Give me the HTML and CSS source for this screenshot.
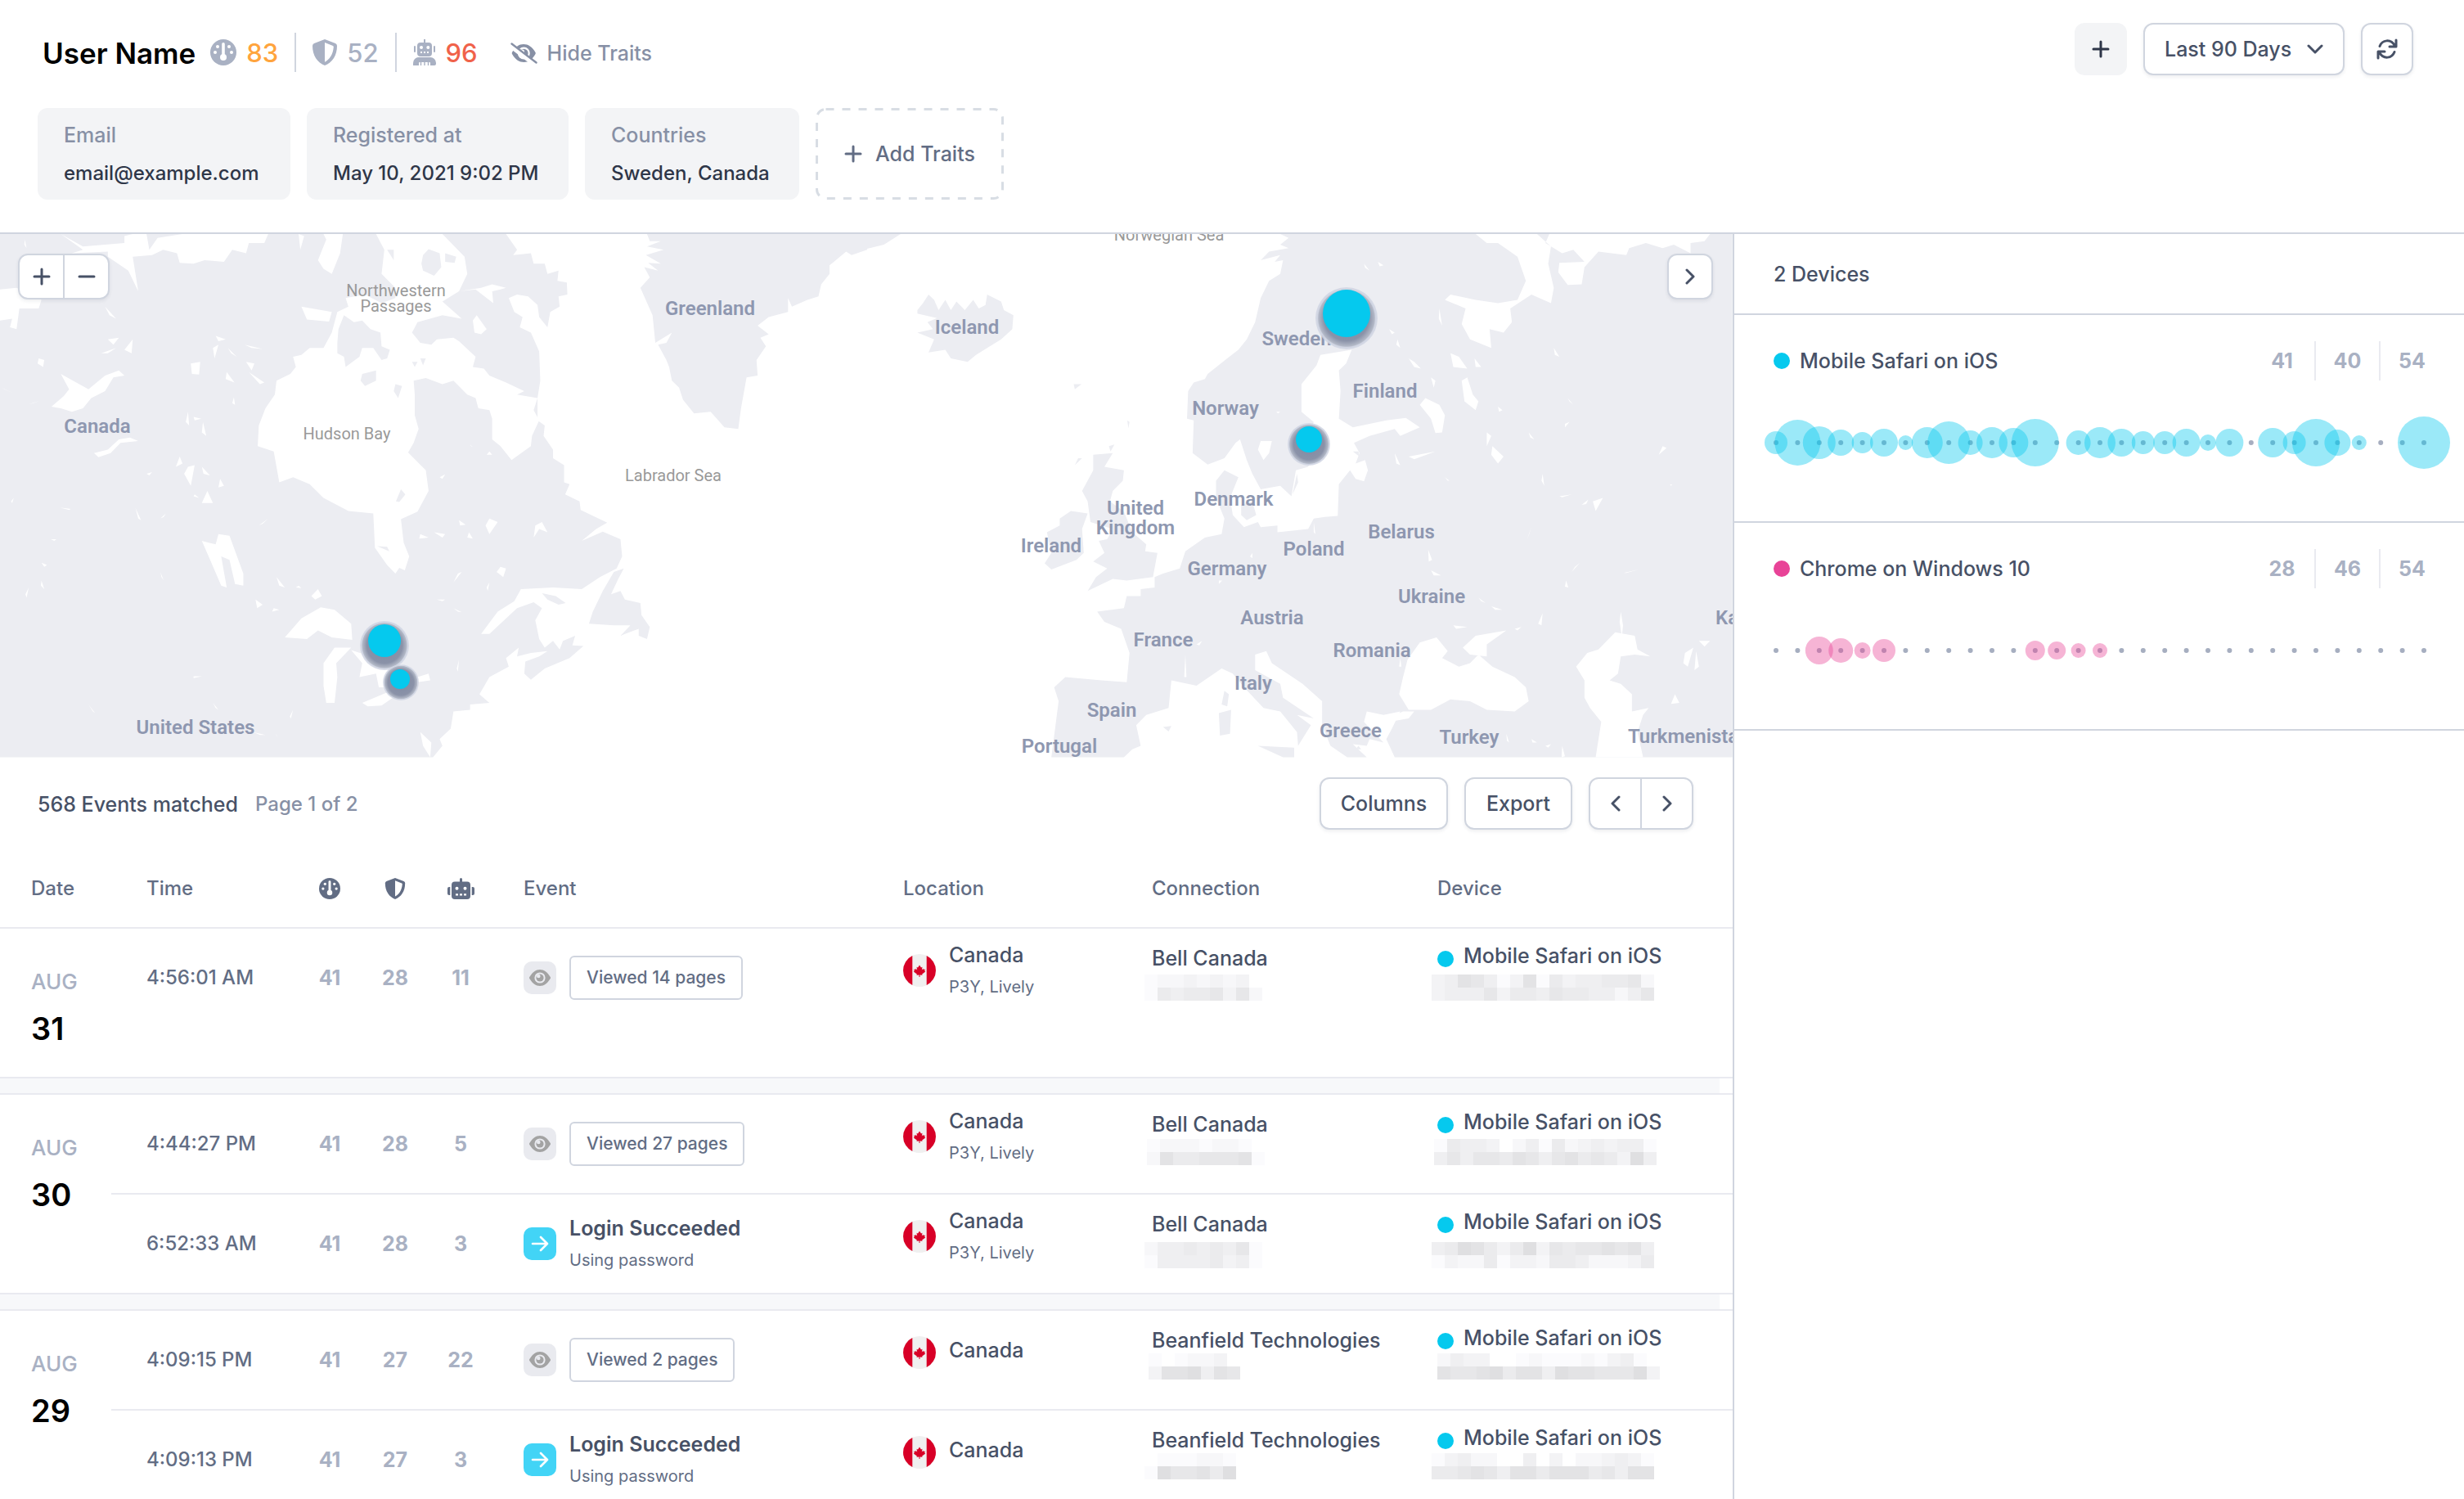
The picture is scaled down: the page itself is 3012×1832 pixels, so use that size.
FILE: index.html
```html
<!DOCTYPE html>
<html lang="en">
<head>
<meta charset="utf-8">
<title>User Name</title>
<link rel="stylesheet" href="styles.css">
</head>
<body>
<svg class="defs" aria-hidden="true">
  <symbol id="gauge" viewBox="0 0 32 32"><circle cx="16" cy="16" r="16" fill="currentColor"/><g fill="#fff"><circle cx="9" cy="9" r="2"/><circle cx="23" cy="9" r="2"/><circle cx="6" cy="16" r="2"/><circle cx="26" cy="16" r="2"/><circle cx="16" cy="22" r="4"/><rect x="14.2" y="4" width="3.6" height="18" rx="1.8"/></g></symbol>
  <symbol id="shield" viewBox="0 0 30 32"><path fill="currentColor" d="M15 0 28 5Q30 6 30 8C30 20 24 28.500 15 32C6 28.500 0 20 0 8Q0 6 2 5Z"/><path fill="#fff" d="M15 4 25 8Q26 8.500 25.800 9.500C25 18.500 21 24.500 15 27.800Z"/></symbol>
  <symbol id="robot" viewBox="0 0 28 32"><path fill="currentColor" d="M13 0h2v4h4a4 4 0 0 1 4 4v9a4 4 0 0 1-4 4H9a4 4 0 0 1-4-4V8a4 4 0 0 1 4-4h4ZM0 32v-3a7 7 0 0 1 7-7h14a7 7 0 0 1 7 7v1q0 2-2 2Z"/><path fill="none" stroke="currentColor" stroke-width="2" stroke-linecap="round" d="M2 9v6M26 9v6"/><g fill="#fff"><circle cx="10" cy="10" r="2"/><circle cx="18.300" cy="10" r="2"/><path d="M9 15h2v2H9ZM13 15h2v2h-2ZM17 15h2v2h-2Z"/><path d="M7 29q0-1 1-1h12q1 0 1 1v3H7Z"/></g><path stroke="currentColor" stroke-width="1.400" d="M9.500 28v4M14 28v4M18.500 28v4"/></symbol>
  <symbol id="bot" viewBox="0 0 33 26"><path fill="currentColor" d="M16.500 0q1.500 0 1.500 1.500V4.500h6a4 4 0 0 1 4 4V22a4 4 0 0 1-4 4H9a4 4 0 0 1-4-4V8.500a4 4 0 0 1 4-4h6V1.500Q15 0 16.500 0ZM3.300 11v10H2a2 2 0 0 1-2-2v-6a2 2 0 0 1 2-2ZM29.700 11H31a2 2 0 0 1 2 2v6a2 2 0 0 1-2 2h-1.300Z"/><g fill="#fff"><circle cx="11.500" cy="12.800" r="2"/><circle cx="21.500" cy="12.800" r="2"/><path d="M10 19.200h3v2.200h-3ZM15 19.200h3v2.200h-3ZM20 19.200h3v2.200h-3Z"/></g></symbol>
  <symbol id="eye" viewBox="0 0 26 20"><path fill="#a3a3a3" d="M.3 9C4 3 8 0 13 0s9 3 12.700 9q.6 1 0 2C22 17 18 20 13 20S4 17 .3 11q-.6-1 0-2Z"/><circle cx="13" cy="10" r="6.600" fill="#e9eaef"/><circle cx="13" cy="10" r="4.600" fill="#a3a3a3"/><circle cx="11.300" cy="8" r="2.300" fill="#e9eaef"/></symbol>
  <symbol id="eye-off" viewBox="0 0 33 26"><path fill="currentColor" d="M2 12C6 5 10.500 2 16 2s10.500 3 14.500 10q.6 1 0 2C26.500 21 22 24 16.500 24S6 21 2 14q-.6-1 0-2Z"/><circle cx="16.300" cy="13" r="7.500" fill="#fff"/><circle cx="16.300" cy="13" r="5.300" fill="currentColor"/><circle cx="14.500" cy="11" r="2.500" fill="#fff"/><path stroke="#fff" stroke-width="5.500" d="m0 4 30 23"/><path stroke="currentColor" stroke-width="2.400" stroke-linecap="round" d="m1.500 1.500 30 23"/></symbol>
  <symbol id="plus" viewBox="0 0 22 22"><path stroke="currentColor" stroke-width="3" stroke-linecap="round" d="M11 2v18M2 11h18"/></symbol>
  <symbol id="minus" viewBox="0 0 22 22"><path stroke="currentColor" stroke-width="3" stroke-linecap="round" d="M2 11h18"/></symbol>
  <symbol id="next" viewBox="0 0 12 20"><path fill="none" stroke="currentColor" stroke-width="3" stroke-linecap="round" stroke-linejoin="round" d="m2 2 8 8-8 8"/></symbol>
  <symbol id="prev" viewBox="0 0 12 20"><path fill="none" stroke="currentColor" stroke-width="3" stroke-linecap="round" stroke-linejoin="round" d="m10 2-8 8 8 8"/></symbol>
  <symbol id="down" viewBox="0 0 20 12"><path fill="none" stroke="currentColor" stroke-width="3" stroke-linecap="round" stroke-linejoin="round" d="m2 2 8 8 8-8"/></symbol>
  <symbol id="refresh" viewBox="0 0 26 26"><g fill="none" stroke="currentColor" stroke-width="3" stroke-linecap="round" stroke-linejoin="round"><path d="M4 9.500C7 1.500 17.500 0 22.500 9M24 2v8h-8M22 16.500C19 24.500 8.500 26 3.500 17M2 24v-8h8"/></g></symbol>
  <symbol id="login" viewBox="0 0 22 20"><path fill="none" stroke="#fff" stroke-width="2.600" stroke-linecap="round" stroke-linejoin="round" d="M2 10h18M12 2l8 8-8 8"/></symbol>
  <symbol id="flag" viewBox="0 0 40 40"><circle cx="20" cy="20" r="20" fill="#f0f0f0"/><path fill="#d80027" d="M11.300 2v36A20 20 0 0 1 11.300 2ZM28.700 2v36A20 20 0 0 0 28.700 2ZM20 13.500l2 3 1.500-.8-.7 3.800 1.700-1.700.5 1.200 2-.4-.8 2 1 .8-4 3 .3 1.400-3-.4v2.600h-1v-2.600l-3 .4.300-1.400-4-3 1-.8-.8-2 2 .4.500-1.200 1.700 1.700-.7-3.800 1.500.8Z"/></symbol>
</svg>

<div class="app">
  <header class="top">
    <div class="title-row">
      <h1>User Name</h1>
      <div class="score"><svg class="i32"><use href="#gauge"/></svg><span class="orange">83</span></div>
      <div class="score"><svg class="i-shield"><use href="#shield"/></svg><span>52</span></div>
      <div class="score"><svg class="i-robot"><use href="#robot"/></svg><span class="red">96</span></div>
      <button class="hide"><svg class="i-eye-off"><use href="#eye-off"/></svg>Hide Traits</button>
      <div class="actions">
        <button class="btn square soft" aria-label="Add"><svg class="i22"><use href="#plus"/></svg></button>
        <div class="range">
          <select class="btn" aria-label="Date range"><option>Last 90 Days</option></select>
          <svg class="i-down"><use href="#down"/></svg>
        </div>
        <button class="btn square" aria-label="Refresh"><svg class="i26"><use href="#refresh"/></svg></button>
      </div>
    </div>
    <div class="traits">
      <div class="trait email"><span>Email</span><b>email@example.com</b></div>
      <div class="trait registered"><span>Registered at</span><b>May 10, 2021 9:02 PM</b></div>
      <div class="trait countries"><span>Countries</span><b>Sweden, Canada</b></div>
      <button class="add"><svg class="dashes" aria-hidden="true"><rect x="1.5" y="1.500" width="227" height="109" rx="11"/></svg><svg class="i22"><use href="#plus"/></svg>Add Traits</button>
    </div>
  </header>

  <div class="body">
    <main>
      <section class="map">
        <svg class="world" viewBox="0 0 2118 640" preserveAspectRatio="xMinYMin slice">
          <defs>
            <radialGradient id="halo"><stop offset="0" stop-color="#7f89a2"/><stop offset=".72" stop-color="#8a92a8"/><stop offset=".9" stop-color="#b3b9c7"/><stop offset=".93" stop-color="#cfd4e2"/><stop offset="1" stop-color="#cfd4e2" stop-opacity=".7"/></radialGradient>
          </defs>
          <g transform="scale(.676 .421) translate(0 -14)">
            <path class="land" d="M0 14H915L935 60 928 75 960 70 965 100 985 100 990 130 1010 120 1008 150 1025 155 1026 190 1010 195 1012 225 995 240 990 285 975 255 972 220 955 195 935 190 920 200 930 240 945 255 940 285 960 300 975 355 977 440 972 490 972 555 985 570 983 600 1000 640 1000 665 1020 685 1020 735 1030 740 1022 770 1048 790 1050 815 1098 852 1078 870 1052 905 1090 878 1122 900 1125 950 1115 985 1085 1010 1052 1045 1000 1040 942 1045 930 1080 900 1110 870 1175 885 1175 935 1100 965 1083 980 1100 968 1135 975 1190 985 1215 1000 1195 1012 1220 1018 1195 1040 1180 1035 1208 1055 1210 1030 1245 985 1275 960 1308 948 1290 950 1255 975 1240 990 1225 960 1230 935 1240 938 1215 915 1245 920 1270 885 1300 867 1350 885 1375 850 1380 850 1395 820 1400 815 1450 795 1480 800 1500 783 1533H0Z"/>
            <path class="sea" d="M610 240 600 300 585 345 560 345 545 365 530 370 535 400 525 420 500 440 497 480 480 520 468 570 466 630 495 645 505 735 530 720 560 740 585 780 630 818 675 825 678 925 700 975 715 1000 722 983 732 990 740 950 730 910 725 842 755 820 775 760 770 700 738 648 748 620 757 580 750 540 750 480 748 440 770 432 800 450 820 440 845 480 860 490 865 520 885 525 890 550 890 610 905 630 925 670 960 630 962 600 975 555 965 525 972 490 935 480 948 470 915 445 885 425 875 405 855 400 860 370 830 325 820 315 790 320 780 335 760 330 745 300 755 270 800 250 835 260 800 210 830 180 845 130 840 80 800 14H680L695 60 690 130 715 170 715 200 690 215 660 190 625 200 630 225Z"/>
            <path class="sea" d="M575 90 590 30 585 14H620L615 70 600 130 585 115ZM540 14 550 20 543 60ZM110 14 150 50 225 40 225 20 240 14H265L270 60 285 25 330 14H485L478 40 450 40 445 70 420 60 405 95 370 90 350 100 325 98 320 70 295 60 275 75 240 80 250 180 232 120 195 80 195 65 130 70 150 60ZM0 175 30 170 75 205 70 230 35 230 30 290 18 285 22 260 0 265ZM545 225 600 240 595 268 555 262ZM93 515 110 520 130 530 150 520 165 490 190 470 205 430 225 425 215 410 190 425 160 465 110 420 125 465 115 485ZM170 650 178 662 200 650 218 620 250 615 235 605 215 610 195 640ZM395 885 415 890 440 1000 440 1035 425 1030 415 960 400 950 410 1040 400 1035 380 960 365 905 390 915ZM325 660 330 680 318 690ZM340 690 352 685 345 745 333 710ZM345 390 362 385 360 422 347 420ZM515 1185 545 1130 580 1098 605 1105 635 1145 637 1192 600 1185 575 1165 555 1190ZM655 1215 605 1215 585 1260 585 1325 590 1375 605 1375 610 1300 608 1260 635 1215ZM635 1222 655 1260 650 1300 680 1290 685 1330 705 1330 740 1275 700 1240 660 1235ZM655 1375 700 1345 715 1355 690 1383 665 1385ZM745 1305 775 1290 778 1310 755 1315ZM855 265 862 250 880 290 870 305 858 300ZM830 180 860 175 892 215 890 180 905 175 915 170 890 160 870 170Z"/>
            <path class="sea" d="M190 225 210 260 198 250ZM195 320 215 315 205 335ZM183 360 210 345 195 360ZM240 320 238 360 225 350ZM390 310 408 320 395 325ZM385 345 395 335 388 375ZM412 345 428 370 418 360ZM442 335 475 348 455 345ZM445 385 460 390 455 410ZM410 415 424 445 408 435ZM450 415 478 445 470 450ZM423 488 425 510 420 505ZM340 530 342 570 336 560ZM350 545 364 550 352 555ZM367 560 373 600 365 590ZM265 710 275 705 270 715ZM365 690 380 715 368 710ZM398 725 405 745 395 750ZM375 760 385 795 365 795ZM352 770 360 780 350 775ZM108 808 128 812 125 815ZM25 780 22 795 20 790ZM290 840 300 825 296 835ZM245 810 255 845 250 840ZM92 900 102 900 98 905ZM75 968 85 975 80 980ZM75 1020 80 1045 74 1035ZM52 1040 48 1070 46 1060ZM290 995 296 1020 292 1010ZM485 840 475 855 468 860ZM575 1045 582 1065 570 1075 563 1065ZM540 1035 545 1042 535 1040ZM500 1010 515 1040 505 1035ZM462 1075 475 1090 465 1100ZM495 1100 505 1105 492 1110ZM760 885 775 895 758 898ZM785 880 805 885 800 895ZM830 845 842 858 832 860ZM848 880 855 898 845 895ZM885 840 900 850 885 885 878 860ZM968 860 980 850 990 880 975 870 965 895ZM795 720 805 712 800 725ZM850 625 855 632 852 630ZM885 645 890 655 880 655ZM905 980 915 985 910 1010 898 995ZM835 995 820 1025 828 1000ZM885 1025 882 1050 880 1040ZM790 1075 805 1075 800 1080ZM820 1100 835 1112 828 1110ZM160 1380 172 1405 168 1400ZM350 1298 365 1298 350 1303ZM385 1375 395 1395 390 1390ZM530 1395 526 1420 524 1415ZM458 1460 480 1468 470 1468ZM498 1465 503 1475 500 1470ZM830 1250 828 1285 826 1275ZM760 1460 780 1490 778 1533 765 1500ZM3 460 22 475 8 465ZM52 508 72 498 60 505ZM70 375 80 380 78 400 68 390ZM45 30 48 55 44 45Z"/>
            <path class="land" d="M765 75 775 58 795 70 798 110 785 135 765 120 762 100ZM655 420 680 410 680 440 660 455 652 440ZM715 450 727 455 720 490 712 470ZM610 330 612 290 622 250 640 270 655 265 670 290 688 300 690 340 705 350 700 375 690 380 675 345 655 345 650 370 625 400 622 370 610 360ZM745 385 755 385 750 400ZM760 375 770 375 765 395ZM725 755 733 770 722 792 716 790ZM682 920 700 922 704 935ZM700 60 712 60 712 90ZM805 70 825 80 822 98 805 95Z"/>
            <path class="land" d="M1128 985 1110 995 1090 1050 1072 1110 1065 1145 1110 1150 1140 1150 1122 1180 1155 1160 1155 1180 1170 1190 1175 1155 1160 1120 1158 1085 1130 1075 1122 1050 1105 1060 1118 1015ZM980 1057 1005 1065 1023 1085 1010 1090 990 1075ZM1170 14 1175 35 1195 35 1170 50 1200 60 1168 75 1195 100 1172 98 1190 120 1165 110 1175 140 1158 170 1180 250 1185 330 1215 300 1205 330 1190 335 1205 380 1210 400 1215 440 1228 460 1235 495 1255 535 1285 530 1310 575 1335 580 1340 520 1350 430 1370 425 1368 380 1385 340 1375 315 1390 305 1370 280 1390 255 1425 240 1425 200 1432 225 1460 205 1480 195 1485 160 1500 130 1500 105 1530 65 1540 75 1568 60V14Z"/>
          </g>
          <g transform="translate(1060 0) scale(.6824 .421) translate(0 -14)">
            <path class="land" d="M0 14H60L30 45 0 57ZM90 235 100 215 110 190 120 205 128 235 140 205 150 235 160 210 175 235 190 205 200 230 212 220 215 190 240 210 245 235 262 250 260 290 240 320 215 345 195 365 180 385 150 375 140 350 110 358 120 320 90 300 118 290 108 270 125 258 90 245ZM370 450 384 450 372 465ZM466 555 470 560 468 578ZM433 630 443 625 436 645Z"/>
            <path class="land" d="M740 14 755 25 740 45 755 55 720 65 705 90 740 75 730 95 745 90 740 130 720 150 705 200 695 270 680 320 665 350 645 375 610 420 605 435 585 445 575 470 573 550 585 555 583 650 610 683 640 665 660 620 668 610 680 670 690 710 705 755 740 745 760 775 768 700 790 690 805 640 790 600 800 560 778 530 778 450 805 395 812 365 868 350 858 390 845 410 848 470 845 550 870 575 930 555 965 548 990 575 955 600 945 580 900 600 872 620 882 650 875 680 892 670 897 700 890 732 875 725 865 700 845 740 843 832 820 835 800 840 790 870 735 880 735 860 705 865 700 850 675 865 655 830 650 780 665 720 640 700 625 730 625 780 640 840 635 885 605 895 570 935 560 985 530 1000 515 1010 515 1040 490 1045 490 1065 465 1065 460 1100 412 1110 425 1140 455 1160 470 1230 465 1315 420 1310 355 1300 335 1330 343 1370 330 1533H460L475 1510 490 1500 482 1440 500 1410 540 1390 545 1310 590 1325 635 1275 655 1290 675 1330 710 1390 740 1400 770 1460 772 1500 795 1440 770 1410 800 1420 745 1360 740 1320 695 1280 695 1235 715 1225 725 1260 780 1320 815 1370 815 1440 830 1500 860 1533 895 1533 870 1495 895 1500 900 1480 925 1490 890 1430 895 1400 925 1410 955 1400 940 1450 930 1480 945 1533H1550V14Z"/>
            <path class="sea" d="M1090 14 1110 40 1130 40 1165 80 1180 150 1165 205 1130 215 1090 205 1045 190 1035 205 1072 230 1065 275 1080 320 1118 345 1115 290 1140 300 1155 270 1152 230 1190 190 1225 215 1230 170 1220 100 1225 50 1200 14ZM1215 40 1222 14H1510L1500 35 1475 40 1475 70 1445 45 1425 55 1395 40 1365 55 1360 75 1310 65 1285 110 1280 160 1255 162 1238 125 1240 98 1285 95 1265 60 1245 70ZM990 510 1000 490 1025 510 1035 540 1030 590 1018 592 1010 550ZM1065 440 1075 430 1085 480 1095 500 1090 525 1070 500ZM1045 360 1060 370 1075 405 1050 400ZM1088 375 1100 400 1090 400ZM1110 590 1118 600 1110 630ZM1120 630 1140 660 1130 680 1118 655ZM953 1350 960 1300 968 1250 990 1200 1020 1185 1040 1225 1030 1245 1060 1270 1080 1260 1095 1235 1120 1270 1160 1300 1180 1330 1185 1370 1160 1400 1110 1395 1080 1370 1045 1365 1010 1395 970 1395ZM1067 1215 1090 1180 1145 1165 1110 1205 1110 1240 1080 1235ZM1270 1270 1290 1230 1310 1220 1340 1170 1375 1180 1380 1220 1403 1240 1375 1235 1350 1240 1345 1290 1330 1310 1350 1320 1370 1350 1370 1400 1400 1390 1390 1410 1380 1460 1390 1533H1305L1315 1430 1295 1390 1285 1360 1285 1310ZM930 1420 960 1400 980 1400 970 1420 935 1430ZM1465 1230 1480 1215 1470 1270 1462 1260ZM1485 1225 1490 1270 1482 1280ZM1490 1195 1510 1195 1500 1212ZM1447 1350 1455 1375 1440 1378ZM705 615 725 615 720 650 710 670 700 640Z"/>
            <path class="sea" d="M970 375 980 385 992 405 980 400ZM950 320 955 345 948 335ZM1010 430 1018 440 1015 460ZM1130 515 1138 525 1132 530ZM1230 345 1240 370 1232 365ZM1255 490 1265 510 1258 500ZM1250 565 1258 560 1250 575ZM1185 590 1195 610 1188 605ZM945 650 955 685 948 680ZM970 660 1018 645 980 668ZM1035 720 1043 730 1040 730ZM1210 710 1213 745 1208 730ZM1240 775 1262 770 1245 778ZM1300 790 1318 780 1305 818ZM1280 800 1292 785 1288 798ZM1425 630 1432 635 1418 655ZM1438 740 1442 742 1440 745ZM1190 865 1182 900 1186 885ZM1005 930 1012 960 1006 965ZM1010 990 1028 1005 1015 1005ZM1277 968 1262 995 1268 980ZM1355 998 1382 988 1360 998ZM1252 1020 1256 1040 1250 1038ZM1095 1070 1108 1085 1100 1080ZM1118 1095 1138 1105 1125 1105ZM1210 1115 1208 1150 1202 1145ZM1050 1150 1075 1155 1055 1160ZM1160 1160 1172 1155 1165 1165ZM1350 1110 1354 1150 1352 1185 1348 1140ZM570 1235 572 1300 568 1300ZM590 1205 600 1195 595 1208ZM690 940 690 955 686 950ZM630 1020 636 1020 630 1030ZM733 530 740 530 736 535ZM800 850 803 885 800 880ZM955 1245 957 1270 953 1270ZM915 95 925 105 918 108ZM890 100 900 120 892 112ZM1025 230 1030 280 1024 260ZM1145 1465 1150 1490 1146 1485ZM1190 1480 1200 1490 1192 1490ZM1165 1365 1180 1380 1170 1370ZM1215 1500 1225 1495 1220 1505ZM1245 1500 1250 1530 1244 1533ZM935 290 945 300 940 305Z"/>
            <path class="land" d="M365 818 395 825 385 870 388 940 375 960 330 988 318 970 330 940 322 880 345 860 345 840ZM405 655 440 650 425 690 460 700 458 730 440 760 435 790 460 820 475 880 500 915 498 935 520 940 512 1010 465 1020 440 1015 395 1050 410 1010 430 985 405 965 425 940 415 905 430 900 440 870 400 850 395 790 385 760 405 700ZM378 665 385 665 372 685ZM670 800 690 790 697 830 680 845 670 830ZM770 710 772 735 762 770ZM640 1340 648 1350 645 1385 635 1380ZM630 1405 652 1395 650 1465 632 1470ZM530 1445 545 1442 540 1458ZM700 1500 765 1505 765 1533 745 1533ZM870 645 880 645 882 660ZM1085 1240 1070 1255 1060 1240ZM880 1500 885 1510 875 1510Z"/>
          </g>
          <g class="country">
            <text x="119" y="243">Canada</text><text x="868" y="99">Greenland</text><text x="1182" y="122">Iceland</text><text x="239" y="611">United States</text>
            <text x="1585" y="136">Sweden</text><text x="1693" y="200">Finland</text><text x="1498" y="221">Norway</text><text x="1508" y="332">Denmark</text>
            <text x="1388" y="343">United</text><text x="1388" y="367">Kingdom</text><text x="1285" y="389">Ireland</text><text x="1500" y="417">Germany</text>
            <text x="1606" y="393">Poland</text><text x="1713" y="372">Belarus</text><text x="1750" y="451">Ukraine</text><text x="1555" y="477">Austria</text>
            <text x="1422" y="504">France</text><text x="1677" y="517">Romania</text><text x="1532" y="557">Italy</text><text x="1359" y="590">Spain</text>
            <text x="1295" y="634">Portugal</text><text x="1651" y="615">Greece</text><text x="1796" y="623">Turkey</text>
            <text class="start" x="1990" y="622">Turkmenista</text><text class="start" x="2097" y="477">Ka</text>
          </g>
          <g class="water">
            <text x="484" y="76">Northwestern</text><text x="484" y="95">Passages</text><text x="424" y="251">Hudson Bay</text><text x="823" y="302">Labrador Sea</text><text x="1429" y="8">Norwegian Sea</text>
          </g>
          <g fill="url(#halo)"><circle cx="1646" cy="103" r="38"/><circle cx="1600" cy="257" r="26"/><circle cx="470" cy="503" r="30"/><circle cx="490" cy="548" r="22"/></g>
          <g fill="#05c9ee"><circle cx="1646" cy="97" r="29"/><circle cx="1600" cy="251" r="16"/><circle cx="470" cy="497" r="20"/><circle cx="489" cy="544" r="12"/></g>
        </svg>
        <div class="zoom"><button aria-label="Zoom in"><svg class="i22"><use href="#plus"/></svg></button><button aria-label="Zoom out"><svg class="i22"><use href="#minus"/></svg></button></div>
        <button class="collapse" aria-label="Collapse"><svg class="i-arrow"><use href="#next"/></svg></button>
      </section>

      <section class="events">
        <div class="toolbar">
          <strong>568 Events matched</strong><span class="page">Page 1 of 2</span>
          <button class="btn columns">Columns</button>
          <button class="btn export">Export</button>
          <div class="pager"><button aria-label="Previous page"><svg class="i-arrow"><use href="#prev"/></svg></button><button aria-label="Next page"><svg class="i-arrow"><use href="#next"/></svg></button></div>
        </div>
        <table>
          <colgroup><col class="c-date"><col class="c-time"><col class="c-score"><col class="c-score"><col class="c-score"><col class="c-event"><col class="c-location"><col class="c-connection"><col></colgroup>
          <thead>
            <tr><th class="date">Date</th><th class="time">Time</th><th class="num" aria-label="Overall"><svg class="i26"><use href="#gauge"/></svg></th><th class="num" aria-label="Abuse"><svg class="i26"><use href="#shield"/></svg></th><th class="num" aria-label="Bot"><svg class="i-bot"><use href="#bot"/></svg></th><th class="event">Event</th><th>Location</th><th>Connection</th><th>Device</th></tr>
          </thead>
          <tbody>
            <tr>
              <td class="date"><span>AUG</span><b>31</b></td>
              <td class="time"><div class="cell">4:56:01 AM</div></td>
              <td class="num"><div class="cell">41</div></td><td class="num"><div class="cell">28</div></td><td class="num"><div class="cell">11</div></td>
              <td class="event"><div class="cell"><span class="badge"><svg class="i-eye"><use href="#eye"/></svg></span><button class="pill">Viewed 14 pages</button></div></td>
              <td><div class="place"><svg class="i40"><use href="#flag"/></svg><div><b>Canada</b><small>P3Y, Lively</small></div></div></td>
              <td class="conn"><b>Bell Canada</b><svg class="mosaic" data-x="0" data-y="4" data-cells="122323230/154556362"></svg></td>
              <td class="dev"><div class="agent"><i class="dot"></i><b>Mobile Safari on iOS</b></div><svg class="mosaic" data-x="2" data-y="4" data-cells="34764137153445562/34446355465544246"></svg></td>
            </tr>
            <tr class="gap"><td colspan="9"><div></div></td></tr>
            <tr>
              <td class="date" rowspan="2"><span>AUG</span><b>30</b></td>
              <td class="time"><div class="cell">4:44:27 PM</div></td>
              <td class="num"><div class="cell">41</div></td><td class="num"><div class="cell">28</div></td><td class="num"><div class="cell">5</div></td>
              <td class="event"><div class="cell"><span class="badge"><svg class="i-eye"><use href="#eye"/></svg></span><button class="pill">Viewed 27 pages</button></div></td>
              <td><div class="place"><svg class="i40"><use href="#flag"/></svg><div><b>Canada</b><small>P3Y, Lively</small></div></div></td>
              <td class="conn"><b>Bell Canada</b><svg class="mosaic" data-x="3" data-y="2" data-cells="12221221/275566671"></svg></td>
              <td class="dev"><div class="agent"><i class="dot"></i><b>Mobile Safari on iOS</b></div><svg class="mosaic" data-x="5" data-y="2" data-cells="15443024152343441/46466576467565384"></svg></td>
            </tr>
            <tr>
              <td class="time"><div class="cell">6:52:33 AM</div></td>
              <td class="num"><div class="cell">41</div></td><td class="num"><div class="cell">28</div></td><td class="num"><div class="cell">3</div></td>
              <td class="event"><div class="cell"><span class="badge login"><svg class="i-login"><use href="#login"/></svg></span><div class="what"><b>Login Succeeded</b><small>Using password</small></div></div></td>
              <td><div class="place"><svg class="i40"><use href="#flag"/></svg><div><b>Canada</b><small>P3Y, Lively</small></div></div></td>
              <td class="conn"><b>Bell Canada</b><svg class="mosaic" data-x="0" data-y="6" data-cells="244545461/144445341"></svg></td>
              <td class="dev"><div class="agent"><i class="dot"></i><b>Mobile Safari on iOS</b></div><svg class="mosaic" data-x="2" data-y="6" data-cells="45875358365667674/13225133255422235"></svg></td>
            </tr>
            <tr class="gap"><td colspan="9"><div></div></td></tr>
            <tr>
              <td class="date" rowspan="2"><span>AUG</span><b>29</b></td>
              <td class="time"><div class="cell">4:09:15 PM</div></td>
              <td class="num"><div class="cell">41</div></td><td class="num"><div class="cell">27</div></td><td class="num"><div class="cell">22</div></td>
              <td class="event"><div class="cell"><span class="badge"><svg class="i-eye"><use href="#eye"/></svg></span><button class="pill">Viewed 2 pages</button></div></td>
              <td><div class="place"><svg class="i40"><use href="#flag"/></svg><div><b>Canada</b></div></div></td>
              <td class="conn"><b>Beanfield Technologies</b><svg class="mosaic" data-x="5" data-y="0" data-cells="1012230/3778476"></svg></td>
              <td class="dev"><div class="agent"><i class="dot"></i><b>Mobile Safari on iOS</b></div><svg class="mosaic" data-x="9" data-y="0" data-cells="24330012111213410/76678577487766683"></svg></td>
            </tr>
            <tr>
              <td class="time"><div class="cell">4:09:13 PM</div></td>
              <td class="num"><div class="cell">41</div></td><td class="num"><div class="cell">27</div></td><td class="num"><div class="cell">3</div></td>
              <td class="event"><div class="cell"><span class="badge login"><svg class="i-login"><use href="#login"/></svg></span><div class="what"><b>Login Succeeded</b><small>Using password</small></div></div></td>
              <td><div class="place"><svg class="i40"><use href="#flag"/></svg><div><b>Canada</b></div></div></td>
              <td class="conn"><b>Beanfield Technologies</b><svg class="mosaic" data-x="0" data-y="0" data-cells="01112210/18667580"></svg></td>
              <td class="dev"><div class="agent"><i class="dot"></i><b>Mobile Safari on iOS</b></div><svg class="mosaic" data-x="2" data-y="0" data-cells="13422004030223431/55676477577756477"></svg></td>
            </tr>
          </tbody>
        </table>
      </section>
    </main>

    <aside>
      <h2>2 Devices</h2>
      <section class="device">
        <div class="device-head"><i class="dot"></i><h3>Mobile Safari on iOS</h3><span>41</span><span>40</span><span>54</span></div>
        <svg class="timeline" data-color="#05c9ee" data-radii="14,28,20,16,13,17,9,19,26,15,19,18,29,0,15,19,17,14,14,17,10,17,0,18,14,29,16,9,0,0,32"></svg>
      </section>
      <section class="device">
        <div class="device-head"><i class="dot pink"></i><h3>Chrome on Windows 10</h3><span>28</span><span>46</span><span>54</span></div>
        <svg class="timeline" data-color="#e84397" data-radii="0,0,17,15,10,14,0,0,0,0,0,0,12,11,9,9,0,0,0,0,0,0,0,0,0,0,0,0,0,0,0"></svg>
      </section>
    </aside>
  </div>
</div>
<script src="charts.js"></script>
</body>
</html>
```

FILE: styles.css
```css
* { box-sizing: border-box; }
body { margin: 0; background: #fff; color: #475166; font: 500 24px/32px Inter, "Liberation Sans", sans-serif; }
button, select { font: inherit; color: inherit; background: none; border: 0; padding: 0; margin: 0; }
h1, h2, h3 { margin: 0; font: inherit; }
svg { display: block; flex: none; }
.defs { position: absolute; width: 0; height: 0; }
.app { height: 100vh; display: flex; flex-direction: column; }

.i22 { width: 22px; height: 22px; }
.i26 { width: 26px; height: 26px; }
.i32 { width: 32px; height: 32px; }
.i40 { width: 40px; height: 40px; }
.i-shield { width: 30px; height: 32px; }
.i-robot { width: 28px; height: 32px; }
.i-eye { width: 26px; height: 20px; }
.i-eye-off { width: 33px; height: 26px; }
.i-bot { width: 33px; height: 26px; }
.i-arrow { width: 12px; height: 20px; }
.i-login { width: 22px; height: 20px; }
.dot { flex: none; width: 20px; height: 20px; border-radius: 50%; background: #05c9ee; }
.dot.pink { background: #e84397; }

/* header */
.top { border-bottom: 2px solid #d0d5df; padding: 28px 62px 40px 46px; }
.title-row { display: flex; align-items: center; height: 72px; margin-bottom: 32px; padding-left: 6px; }
h1 { color: #000; font-size: 35px; font-weight: 600; line-height: 40px; margin-right: 18px; padding-top: 1px; }
.score { display: flex; align-items: center; gap: 12px; height: 48px; font-size: 31px; color: #a9b1c3; }
.score span { padding-top: 1px; }
.score + .score { border-left: 2px solid #d0d5df; margin-left: 20px; padding-left: 20px; }
.orange { color: #ffa43d; }
.red { color: #f0624a; }
.hide { display: flex; align-items: center; gap: 12px; margin-left: 40px; padding-top: 1px; color: #8790a5; font-size: 25px; }
.actions { display: flex; gap: 20px; margin-left: auto; align-self: flex-start; }
.btn { height: 64px; border: 2px solid #d0d5df; border-radius: 12px; background: #fff; box-shadow: 0 2px 4px #1e284014; font-size: 25px; }
.square { width: 64px; display: flex; align-items: center; justify-content: center; }
.soft { background: #f3f4f6; border-color: #f3f4f6; box-shadow: none; color: #2e3648; }
.range { position: relative; }
.range select { appearance: none; width: 246px; padding-left: 24px; }
.i-down { position: absolute; right: 26px; top: 26px; width: 20px; height: 12px; pointer-events: none; }
.traits { display: flex; gap: 20px; }
.trait { height: 112px; border-radius: 12px; background: #f3f4f6; padding: 17px 0 16px 32px; display: flex; flex-direction: column; justify-content: space-between; color: #8790a5; font-size: 25px; }
.trait b { color: #2e3648; font-size: 24px; font-weight: 500; }
.email { width: 309px; }
.registered { width: 320px; }
.countries { width: 262px; }
.add { position: relative; width: 230px; color: #626d84; font-size: 25px; display: flex; align-items: center; justify-content: center; gap: 16px; }
.dashes { position: absolute; left: 0; top: 0; width: 230px; height: 112px; fill: none; stroke: #d8dde4; stroke-width: 3px; stroke-dasharray: 10 10; }
.email { width: 309px; }
.registered { width: 320px; }
.countries { width: 262px; }

.body { flex: 1; min-height: 0; display: grid; grid-template-columns: minmax(0, 1fr) 894px; }
main { overflow-y: auto; scrollbar-width: none; }

/* map */
.map { position: relative; height: 640px; overflow: hidden; }
.world { width: 100%; height: 640px; }
.land { fill: #ecedf2; }
.sea { fill: #fff; }
.country, .water { font-family: Roboto, sans-serif; text-anchor: middle; }
.country { font-size: 24px; font-weight: 600; fill: #8e97b0; }
.water { font-size: 20px; font-weight: 400; fill: #999; }
.country .start { text-anchor: start; }
.zoom, .collapse, .pager { display: flex; border: 2px solid #d0d5df; border-radius: 12px; background: #fff; box-shadow: 0 2px 4px #1e284014; }
.zoom { position: absolute; left: 22px; top: 24px; width: 112px; height: 56px; }
.zoom button, .pager button { flex: 1; display: flex; align-items: center; justify-content: center; }
.zoom button + button, .pager button + button { border-left: 2px solid #d0d5df; }
.collapse { position: absolute; right: 24px; top: 24px; width: 56px; height: 56px; align-items: center; justify-content: center; }

/* events */
.toolbar { display: flex; align-items: center; height: 112px; padding: 0 48px 0 46px; }
.toolbar strong { font-size: 25px; font-weight: 500; padding-top: 2px; }
.page { color: #8790a5; margin: 0 auto 0 21px; padding-top: 2px; }
.columns { width: 157px; margin-right: 20px; }
.export { width: 132px; margin-right: 20px; }
.pager { width: 128px; height: 64px; }
table { width: 100%; table-layout: fixed; border-collapse: separate; border-spacing: 0; }
.c-date { width: 136px; }
.c-time { width: 227px; }
.c-score { width: 80px; }
.c-event { width: 501px; }
.c-location { width: 304px; }
.c-connection { width: 349px; }
th { height: 97px; padding: 0; text-align: left; font-weight: 500; color: #626d84; border-bottom: 2px solid #e9eaf0; }
th.num svg { margin: 0 auto; }
td { padding: 0; vertical-align: top; border-bottom: 2px solid #e9eaf0; }
td b { display: block; font-size: 25px; font-weight: 500; white-space: nowrap; }
small { display: block; font-size: 20px; line-height: 32px; font-weight: 400; color: #626d84; }
th.date, td.date { padding-left: 38px; }
td.date { height: 183px; padding-top: 49px; color: #a9b1c3; font-size: 26px; }
td.date span { display: block; margin-bottom: 19px; }
td.date b { color: #000; font-size: 38px; line-height: 44px; font-weight: 600; }
.time { padding-left: 43px; color: #626d84; }
.num { text-align: center; }
td.num { color: #a9b1c3; font-size: 25px; font-weight: 700; }
td.num .cell { justify-content: center; }
.event { padding-left: 37px; }
.cell { height: 120px; display: flex; align-items: center; }
.badge { width: 40px; height: 40px; border-radius: 10px; background: #e9eaef; display: flex; align-items: center; justify-content: center; margin-right: 16px; }
.badge.login { background: #42d4f6; }
.pill { height: 54px; padding: 0 19px; border: 2px solid #d0d5df; border-radius: 6px; font-size: 21px; color: #626d84; }
.what b { font-weight: 600; margin-bottom: 7px; }
.place { height: 102px; display: flex; align-items: center; gap: 16px; }
.place b { margin-bottom: 7px; }
.conn { padding-top: 20px; }
.dev { padding-top: 17px; }
.agent { display: flex; gap: 12px; margin-bottom: 3px; }
.agent .dot { margin-top: 10px; }
.mosaic { width: 290px; height: 40px; margin-left: -9px; }
.gap div { height: 18px; margin-right: 16px; background: #f7f8fa; }

/* devices */
aside { border-left: 2px solid #d0d5df; }
h2 { height: 99px; line-height: 99px; padding-left: 48px; border-bottom: 2px solid #d0d5df; font-size: 25px; }
.device { height: 254px; padding-top: 32px; border-bottom: 2px solid #d0d5df; }
.device-head { display: flex; align-items: center; height: 48px; padding: 0 25px 0 48px; }
.device-head h3 { margin: 0 auto 0 12px; font-size: 25px; }
.device-head span { width: 79px; height: 48px; line-height: 48px; text-align: center; font-size: 25px; font-weight: 700; color: #a9b1c3; }
.device-head span + span { border-left: 2px solid #e9eaf0; }
.timeline { width: 100%; height: 100px; margin-top: 26px; }
```

FILE: charts.js
```js
const NS = "http://www.w3.org/2000/svg";

function draw(parent, tag, attributes) {
  const node = document.createElementNS(NS, tag);
  for (const name in attributes) node.setAttribute(name, attributes[name]);
  parent.appendChild(node);
}

// Redacted values: each digit is the darkness of one 16px cell.
document.querySelectorAll(".mosaic").forEach((svg) => {
  const left = Number(svg.dataset.x);
  const top = Number(svg.dataset.y);
  svg.dataset.cells.split("/").forEach((row, r) => {
    [...row].forEach((digit, c) => {
      const v = 255 - digit * 4;
      draw(svg, "rect", { x: left + c * 16, y: top + r * 16, width: 16, height: 16, fill: `rgb(${v},${v},${Math.min(255, v + 2)})` });
    });
  });
});

// Device activity: one dot per day, a bubble sized by that day's events.
document.querySelectorAll(".timeline").forEach((svg) => {
  const radii = svg.dataset.radii.split(",").map(Number);
  radii.forEach((r, i) => draw(svg, "circle", { cx: 51 + i * 26.4, cy: 50, r: 3, fill: "#a6aec0" }));
  radii.forEach((r, i) => {
    if (r) draw(svg, "circle", { cx: 51 + i * 26.4, cy: 50, r, fill: svg.dataset.color, "fill-opacity": 0.4 });
  });
});
```
